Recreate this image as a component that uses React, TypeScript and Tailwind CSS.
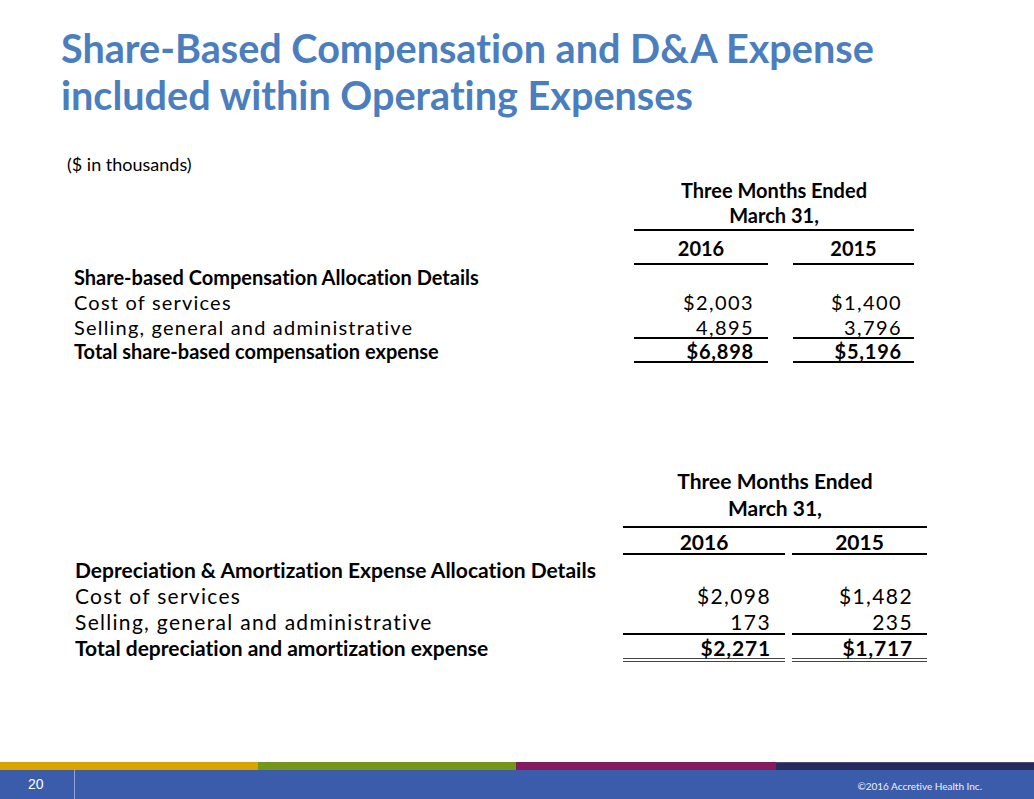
import React from "react";

const lato = { fontFamily: "Lato, 'Open Sans', sans-serif" };

type Row = { label: string; a: string; b: string; kind: "head" | "plain" | "sub" | "total" };

const shareRows: Row[] = [
  { label: "Share-based Compensation Allocation Details", a: "", b: "", kind: "head" },
  { label: "Cost of services", a: "$2,003", b: "$1,400", kind: "plain" },
  { label: "Selling, general and administrative", a: "4,895", b: "3,796", kind: "sub" },
  { label: "Total share-based compensation expense", a: "$6,898", b: "$5,196", kind: "total" },
];

const daRows: Row[] = [
  { label: "Depreciation & Amortization Expense Allocation Details", a: "", b: "", kind: "head" },
  { label: "Cost of services", a: "$2,098", b: "$1,482", kind: "plain" },
  { label: "Selling, general and administrative", a: "173", b: "235", kind: "sub" },
  { label: "Total depreciation and amortization expense", a: "$2,271", b: "$1,717", kind: "total" },
];

function cellCls(kind: Row["kind"], dbl: boolean) {
  if (kind === "sub") return "border-b-2 border-black tracking-[1.4px]";
  if (kind === "total")
    return dbl
      ? "border-b-4 border-double border-[#444] font-bold tracking-[0.8px]"
      : "border-b-2 border-black font-bold tracking-[0.8px]";
  return "tracking-[1.4px]";
}

function ShareTable() {
  return (
    <div
      className="ml-[74px] mt-[2px] text-[20px] text-black [font-variant-ligatures:none]"
      style={lato}
    >
      <div className="ml-[560px] w-[280px] text-center font-bold leading-[25px]">
        <div>Three Months Ended</div>
        <div className="h-[28px] border-b-2 border-black">March 31,</div>
      </div>
      <div className="flex h-[34px] font-bold leading-[35px]">
        <div className="w-[560px]" />
        <div className="w-[134px] border-b-2 border-black text-center">2016</div>
        <div className="w-[25px]" />
        <div className="w-[121px] border-b-2 border-black text-center">2015</div>
      </div>
      {shareRows.map((r, i) => (
        <div
          key={i}
          className={
            "flex leading-[24.5px] " +
            (r.kind === "head" || r.kind === "plain" ? "h-[25px]" : "h-[24px]")
          }
        >
          <div
            className={
              r.kind === "head" || r.kind === "total"
                ? "w-[560px] font-bold"
                : "w-[560px] tracking-[1.2px]"
            }
          >
            {r.label}
          </div>
          <div className={"w-[134px] pr-[14px] text-right " + cellCls(r.kind, false)}>{r.a}</div>
          <div className="w-[25px]" />
          <div className={"w-[121px] pr-[12px] text-right " + cellCls(r.kind, false)}>{r.b}</div>
        </div>
      ))}
    </div>
  );
}

function DaTable() {
  return (
    <div
      className="ml-[75px] mt-[104px] text-[21px] text-black [font-variant-ligatures:none]"
      style={lato}
    >
      <div className="ml-[548px] w-[304px] text-center font-bold leading-[27px]">
        <div>Three Months Ended</div>
        <div className="h-[34px] border-b-2 border-black">March 31,</div>
      </div>
      <div className="flex h-[27px] font-bold leading-[28px]">
        <div className="w-[548px]" />
        <div className="w-[162px] border-b-2 border-black text-center">2016</div>
        <div className="w-[7px]" />
        <div className="w-[135px] border-b-2 border-black text-center">2015</div>
      </div>
      <div className="h-[2px]" />
      {daRows.map((r, i) => (
        <div
          key={i}
          className={"flex leading-[26px] " + (r.kind === "total" ? "h-[27px]" : "h-[26px]")}
        >
          <div
            className={
              r.kind === "head" || r.kind === "total"
                ? "w-[548px] whitespace-nowrap font-bold"
                : "w-[548px] tracking-[1.3px]"
            }
          >
            {r.label}
          </div>
          <div className={"w-[162px] pr-[14px] text-right " + cellCls(r.kind, true)}>{r.a}</div>
          <div className="w-[7px]" />
          <div className={"w-[135px] pr-[14px] text-right " + cellCls(r.kind, true)}>{r.b}</div>
        </div>
      ))}
    </div>
  );
}

export default function App() {
  return (
    <div className="flex h-[799px] w-[1034px] flex-col overflow-hidden bg-white">
      <h1
        className="pl-[61px] pt-[24px] text-[39.6px] font-bold leading-[47px] text-[#4a7ebf] [font-variant-ligatures:none]"
        style={lato}
      >
        Share-Based Compensation and D&amp;A Expense
        <br />
        included within Operating Expenses
      </h1>
      <div className="mt-[34px] pl-[67px] text-[18px] leading-[24px] text-black" style={lato}>
        ($ in thousands)
      </div>

      <ShareTable />
      <DaTable />

      <div className="flex-1" />

      {/* footer stripes + bar */}
      <div className="flex h-[8px]">
        <div className="w-[258px] bg-[#d9a400]" />
        <div className="w-[258px] bg-[#74961a]" />
        <div className="w-[260px] bg-[#861a5e]" />
        <div className="flex-1 border-t border-[#4a4f80] bg-[#262a5c]" />
      </div>
      <div className="flex h-[29px] items-center bg-[#3b5cab] text-white">
        <div
          className="w-[74px] pl-[28px] text-[14px]"
          style={{ fontFamily: "'Liberation Sans', Arial, sans-serif" }}
        >
          20
        </div>
        <div className="h-full w-px bg-[#8ea3d6]" />
        <div className="flex-1" />
        <div
          className="pr-[52px] pt-[3px] text-[10px] text-[#eef1fa] [font-variant-ligatures:none]"
          style={lato}
        >
          ©2016 Accretive Health Inc.
        </div>
      </div>
    </div>
  );
}
